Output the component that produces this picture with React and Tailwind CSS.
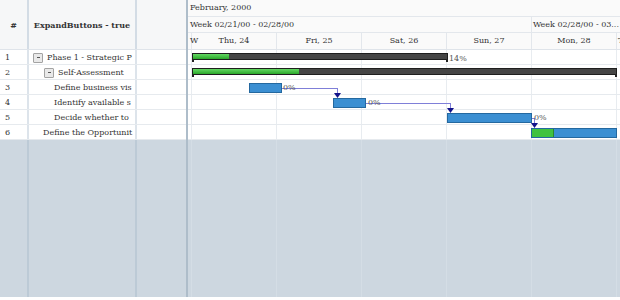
import React from "react";

const rows = [
  { n: 1, name: "Phase 1 - Strategic P", pl: "pl-[4px]", btn: true },
  { n: 2, name: "Self-Assessment", pl: "pl-[15px]", btn: true },
  { n: 3, name: "Define business vis", pl: "pl-[25px]" },
  { n: 4, name: "Identify available s", pl: "pl-[25px]" },
  { n: 5, name: "Decide whether to", pl: "pl-[25px]" },
  { n: 6, name: "Define the Opportunit", pl: "pl-[14px]" },
];

function DayCells({ line }) {
  return (
    <div className="flex h-full">
      <div className={`w-[4px] shrink-0 border-r ${line}`} />
      <div className={`w-[85px] shrink-0 border-r ${line}`} />
      <div className={`w-[85px] shrink-0 border-r ${line}`} />
      <div className={`w-[85px] shrink-0 border-r ${line}`} />
      <div className={`w-[85px] shrink-0 border-r ${line}`} />
      <div className={`w-[85px] shrink-0 border-r ${line}`} />
      <div className="flex-1" />
    </div>
  );
}

function Btn() {
  return (
    <div className="w-[10px] h-[10px] shrink-0 border border-[#a3a3a3] bg-[#e9e9e9] rounded-[1px] flex items-center justify-center mr-[4px]">
      <div className="w-[3px] h-[1px] bg-[#555]" />
    </div>
  );
}

function Summary({ left, top, width, prog }) {
  return (
    <div className="absolute" style={{ left, top, width }}>
      <div className="relative h-[7px] border border-[#1e1e1e] bg-[#454545] overflow-hidden">
        <div className="h-full bg-gradient-to-b from-[#62d862] to-[#29a829]" style={{ width: prog }} />
      </div>
      <div className="absolute left-0 top-[6px] w-[2px] h-[3px] bg-[#222]" />
      <div className="absolute right-0 top-[6px] w-[2px] h-[3px] bg-[#222]" />
    </div>
  );
}

function Task({ left, top, width, prog = 0 }) {
  return (
    <div
      className="absolute h-[10px] border border-[#24689f] bg-[#3b8fd2] flex overflow-hidden"
      style={{ left, top, width }}
    >
      {prog > 0 && <div className="h-full bg-[#40c240] border-r border-[#2a8a2a]" style={{ width: prog }} />}
    </div>
  );
}

function Link({ x1, y, x2, y2 }) {
  return (
    <>
      <div className="absolute h-[1px] bg-[#7f7fd8]" style={{ left: x1, top: y, width: x2 - x1 + 1 }} />
      <div className="absolute w-[1px] bg-[#7f7fd8]" style={{ left: x2, top: y, height: y2 - y - 3 }} />
      <svg className="absolute" style={{ left: x2 - 3, top: y2 - 5 }} width="7" height="5" viewBox="0 0 7 5">
        <polygon points="0,0 7,0 3.5,5" fill="#12128a" />
      </svg>
    </>
  );
}

function Pct({ left, top, children }) {
  return (
    <div className="absolute text-[8px] leading-[10px] text-[#555]" style={{ left, top }}>
      {children}
    </div>
  );
}

export default function App() {
  return (
    <div className="w-[620px] h-[300px] bg-white font-['DejaVu_Serif',serif] text-[8px] text-[#333] overflow-hidden">
      <div className="flex h-[297px] bg-[#cdd7e0]">
        {/* Left grid */}
        <div className="w-[186px] shrink-0 flex flex-col">
          <div className="h-[50px] flex bg-[#f6f7f8] border-b border-[#dfe4ea] font-bold text-[#333]">
            <div className="w-[29px] border-r-2 border-[#d3dce5] flex items-center justify-center">#</div>
            <div className="w-[108px] border-r-2 border-[#d3dce5] flex items-center justify-center">ExpandButtons - true</div>
            <div className="flex-1" />
          </div>
          {rows.map((r) => (
            <div key={r.n} className="h-[15px] flex bg-white border-b border-[#e6eaee]">
              <div className="w-[29px] border-r-2 border-[#dde4eb] pl-[5px] pt-[1px] flex items-center leading-none">{r.n}</div>
              <div className={`w-[108px] border-r-2 border-[#dde4eb] ${r.pl} pr-[2px] pt-[1px] flex items-center whitespace-nowrap leading-none`}>
                {r.btn && <Btn />}
                <span>{r.name}</span>
              </div>
              <div className="flex-1" />
            </div>
          ))}
          <div className="flex-1 flex">
            <div className="w-[29px] border-r-2 border-[#bccad6]" />
            <div className="w-[108px] border-r-2 border-[#bccad6]" />
            <div className="flex-1" />
          </div>
        </div>
        {/* Splitter */}
        <div className="w-[2px] shrink-0 bg-[#aebdca]" />
        {/* Gantt */}
        <div className="w-[432px] shrink-0 flex flex-col overflow-hidden">
          <div className="h-[50px] flex flex-col bg-[#fafafa] border-b border-[#dfe4ea] text-[#333]">
            <div className="h-[17px] border-b border-[#e3e7ec] flex items-center pl-[2px]">February, 2000</div>
            <div className="h-[16px] border-b border-[#e3e7ec] flex">
              <div className="w-[344px] shrink-0 border-r border-[#e3e7ec] flex items-center pl-[2px]">Week 02/21/00 - 02/28/00</div>
              <div className="flex-1 flex items-center pl-[1px] whitespace-nowrap">Week 02/28/00 - 03...</div>
            </div>
            <div className="flex-1 flex whitespace-nowrap">
              <div className="w-[4px] shrink-0 border-r border-[#e3e7ec] flex items-center pl-[2px] overflow-visible">W</div>
              {["Thu, 24", "Fri, 25", "Sat, 26", "Sun, 27", "Mon, 28"].map((d) => (
                <div key={d} className="w-[85px] shrink-0 border-r border-[#e3e7ec] flex items-center justify-center">
                  {d}
                </div>
              ))}
              <div className="flex-1 flex items-center pl-[1px]">T</div>
            </div>
          </div>
          <div className="relative flex-1 flex flex-col">
            {rows.map((r) => (
              <div key={r.n} className="h-[15px] bg-white border-b border-[#e6eaee]">
                <DayCells line="border-[#e8ecf0]" />
              </div>
            ))}
            <div className="flex-1">
              <DayCells line="border-[#d4dde5]" />
            </div>

            <Summary left={4} top={3} width={256} prog={36} />
            <Pct left={261} top={4}>14%</Pct>
            <Summary left={4} top={18} width={425} prog={106} />

            <Link x1={94} y={38} x2={149} y2={48} />
            <Task left={61} top={33} width={33} />
            <Pct left={95} top={33}>0%</Pct>

            <Link x1={178} y={53} x2={262} y2={63} />
            <Task left={145} top={48} width={33} />
            <Pct left={180} top={48}>0%</Pct>

            <Link x1={344} y={68} x2={346} y2={78} />
            <Task left={259} top={63} width={85} />
            <Pct left={346} top={63}>0%</Pct>

            <Task left={343} top={78} width={86} prog={22} />
          </div>
        </div>
      </div>
    </div>
  );
}
